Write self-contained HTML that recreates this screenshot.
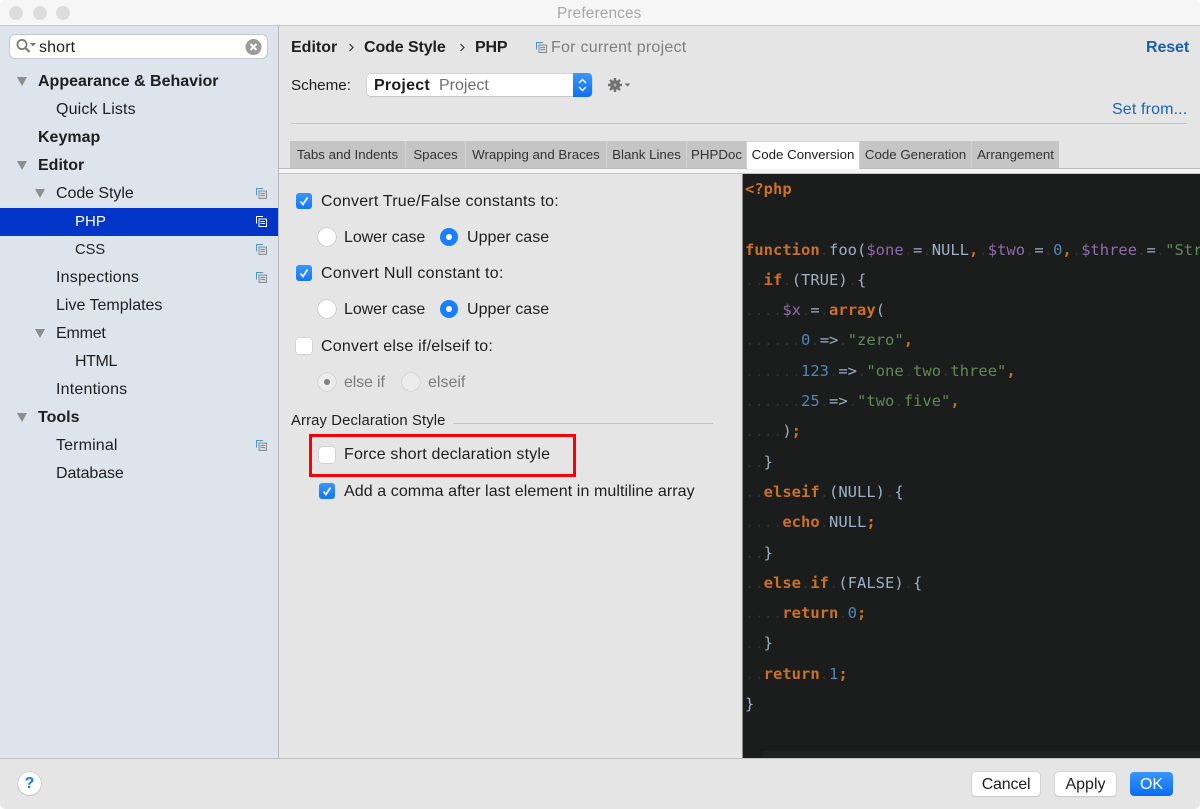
<!DOCTYPE html>
<html><head><meta charset="utf-8"><title>Preferences</title>
<style>
html,body{margin:0;padding:0;background:#fff;width:1200px;height:809px;overflow:hidden}
#w{position:relative;width:1200px;height:809px;overflow:hidden;background:#e5e5e5;border-radius:6px 6px 6px 6px;font-family:"Liberation Sans",sans-serif;font-size:16px;color:#1e1e1e;filter:blur(.3px)}
.a{position:absolute}
.t{position:absolute;white-space:nowrap;line-height:20px;height:20px;letter-spacing:.14px}
.b{font-weight:bold;letter-spacing:0}
.tab{position:absolute;top:141px;height:27px;background:#c5c5c5;font-size:13.3px;line-height:28px;text-align:center;color:#333;white-space:nowrap}
.cb{position:absolute;width:16px;height:16px;border-radius:3px;background:#fff;box-shadow:0 0 0 .5px #bdbdbd}
.cb.on{background:linear-gradient(#3a96fb,#1477f6);box-shadow:none}
.r{position:absolute;width:18px;height:18px;border-radius:50%;background:#fff;box-shadow:0 0 0 .5px #b5b5b5}
.r.on{background:#1a7ffa;box-shadow:none}
.r.on:after{content:"";position:absolute;left:6px;top:6px;width:6px;height:6px;border-radius:50%;background:#fff}
.r.d{background:#ececec;box-shadow:0 0 0 .5px #c4c4c4}
.tri{position:absolute;width:0;height:0;border-left:5.5px solid transparent;border-right:5.5px solid transparent;border-top:9px solid #8e8e8e}
.btn{position:absolute;top:772px;height:24px;background:#fff;border-radius:4px;box-shadow:0 0 0 .5px #c2c2c2,0 1px 1px #ccc;text-align:center;line-height:25px}
#code{position:absolute;left:745px;top:174px;width:455px;height:584px;overflow:hidden;font-family:"DejaVu Sans Mono",monospace;font-size:15.5px;line-height:30.3px;white-space:pre;color:#9db0c7}
#code b{color:#c9702b;font-weight:bold}
#code i{font-style:normal;color:#2f3232}
#code u{text-decoration:none;color:#8d6ca8}
#code s{text-decoration:none;color:#4f86b8}
#code em{font-style:normal;color:#5f8a55}
#code em i{color:#2f3232}
</style></head><body>
<div id="w">
<!-- title bar -->
<div class="a" style="left:0;top:0;width:1200px;height:25px;background:#f6f6f6;border-bottom:1px solid #c9c9c9"></div>
<div class="a" style="left:9px;top:6px;width:14px;height:14px;border-radius:50%;background:#dcdcdc"></div>
<div class="a" style="left:33px;top:6px;width:14px;height:14px;border-radius:50%;background:#dcdcdc"></div>
<div class="a" style="left:56px;top:6px;width:14px;height:14px;border-radius:50%;background:#dcdcdc"></div>
<div class="t" style="left:557px;top:4px;color:#a8a8a8;font-size:15.4px">Preferences</div>

<!-- sidebar -->
<div class="a" style="left:0;top:26px;width:278px;height:732px;background:#dee4ec;border-right:1px solid #b9b9b9"></div>
<div class="a" style="left:10px;top:35px;width:257px;height:23px;background:#fff;border-radius:5px;box-shadow:0 0 0 1px #c6cacf"></div>
<svg class="a" style="left:15px;top:38px" width="22" height="17" viewBox="0 0 22 17"><circle cx="7" cy="6.500" r="4.600" fill="none" stroke="#777" stroke-width="1.700"/><path d="M10.500 10l4 4" stroke="#777" stroke-width="2"/><path d="M15 5h6l-3 3.500z" fill="#777"/></svg>
<div class="t" style="left:39px;top:38px">short</div>
<svg class="a" style="left:245px;top:39px" width="17" height="17" viewBox="0 0 17 17"><circle cx="8.500" cy="8" r="8" fill="#9b9b9b"/><path d="M5.500 5l6 6M11.500 5l-6 6" stroke="#fff" stroke-width="2"/></svg>

<div class="tri" style="left:17px;top:77px"></div>
<div class="t b" style="left:38px;top:72px">Appearance &amp; Behavior</div>
<div class="t" style="left:56px;top:100px">Quick Lists</div>
<div class="t b" style="left:38px;top:128px">Keymap</div>
<div class="tri" style="left:17px;top:161px"></div>
<div class="t b" style="left:38px;top:156px">Editor</div>
<div class="tri" style="left:35px;top:189px"></div>
<div class="t" style="left:56px;top:184px;letter-spacing:-.06px">Code Style</div>
<div class="a" style="left:0;top:208px;width:278px;height:28px;background:#0336c8"></div>
<div class="t" style="left:75px;top:212px;color:#fff;font-size:15px;letter-spacing:0">PHP</div>
<div class="t" style="left:75px;top:240px;font-size:14.7px;letter-spacing:0">CSS</div>
<div class="t" style="left:56px;top:268px;letter-spacing:.2px">Inspections</div>
<div class="t" style="left:56px;top:296px;letter-spacing:0">Live Templates</div>
<div class="tri" style="left:35px;top:329px"></div>
<div class="t" style="left:56px;top:324px;letter-spacing:-.2px">Emmet</div>
<div class="t" style="left:75px;top:352px;letter-spacing:-.4px">HTML</div>
<div class="t" style="left:56px;top:380px;letter-spacing:.2px">Intentions</div>
<div class="tri" style="left:17px;top:413px"></div>
<div class="t b" style="left:38px;top:408px">Tools</div>
<div class="t" style="left:56px;top:436px">Terminal</div>
<div class="t" style="left:56px;top:464px;letter-spacing:-.1px">Database</div>

<svg width="0" height="0" style="position:absolute"><symbol id="cp" viewBox="0 0 11 11"><path d="M7 .5H.5V7.500" fill="#cfe0f0" stroke="#4f93c9" stroke-width="1"/><rect x="3" y="3" width="7.500" height="7.500" fill="#d5d8dc" stroke="#8a8f94"/><path d="M4.500 5.500h4.500M4.500 7.500h4.500" stroke="#8a8f94"/></symbol>
<symbol id="cw" viewBox="0 0 11 11"><path d="M7 .5H.5V7.500" fill="none" stroke="#fff"/><rect x="3" y="3" width="7.500" height="7.500" fill="none" stroke="#fff"/><path d="M4.500 5.500h4.500M4.500 7.500h4.500" stroke="#fff"/></symbol></svg>
<svg class="a" style="left:256px;top:188px" width="11" height="11"><use href="#cp"/></svg>
<svg class="a" style="left:256px;top:216px" width="11" height="11"><use href="#cw"/></svg>
<svg class="a" style="left:256px;top:244px" width="11" height="11"><use href="#cp"/></svg>
<svg class="a" style="left:256px;top:272px" width="11" height="11"><use href="#cp"/></svg>
<svg class="a" style="left:256px;top:440px" width="11" height="11"><use href="#cp"/></svg>

<!-- header -->
<div class="t b" style="left:291px;top:38px">Editor</div>
<svg class="a" style="left:348px;top:43px" width="7" height="10"><path d="M1.500 1l3.500 3.500L1.500 8" fill="none" stroke="#333" stroke-width="1.200"/></svg>
<div class="t b" style="left:364px;top:38px;letter-spacing:-.1px">Code Style</div>
<svg class="a" style="left:459px;top:43px" width="7" height="10"><path d="M1.500 1l3.500 3.500L1.500 8" fill="none" stroke="#333" stroke-width="1.200"/></svg>
<div class="t b" style="left:475px;top:38px;letter-spacing:-.2px">PHP</div>
<svg class="a" style="left:536px;top:42px" width="11" height="11"><use href="#cp"/></svg>
<div class="t" style="left:551px;top:38px;color:#7e7e7e;letter-spacing:.25px">For current project</div>
<div class="t b" style="left:1146px;top:38px;color:#1a5fae;letter-spacing:-.1px">Reset</div>

<div class="t" style="left:291px;top:76px;font-size:15.2px;letter-spacing:0">Scheme:</div>
<div class="a" style="left:367px;top:74px;width:225px;height:22px;background:#fff;border-radius:4px;box-shadow:0 0 0 .5px #c0c0c0,0 1px 1px #c8c8c8"></div>
<div class="a" style="left:573px;top:73px;width:19px;height:24px;border-radius:0 4px 4px 0;background:linear-gradient(#3d97fb,#0f6ff0)"></div>
<svg class="a" style="left:577px;top:77px" width="11" height="16"><path d="M2 6l3.500-3.500L9 6M2 10l3.500 3.500L9 10" fill="none" stroke="#fff" stroke-width="1.400"/></svg>
<div class="t b" style="left:374px;top:76px;letter-spacing:.25px">Project</div>
<div class="t" style="left:439px;top:76px;color:#6f6f6f;letter-spacing:0">Project</div>
<svg class="a" style="left:607px;top:77px" width="24" height="16" viewBox="0 0 24 16"><g fill="#717171"><circle cx="8" cy="8" r="5"/><g stroke="#717171" stroke-width="2.400"><path d="M8 1v14M1 8h14M3 3l10 10M13 3L3 13"/></g><path d="M17.500 6.500h6l-3 3z"/></g><circle cx="8" cy="8" r="1.500" fill="#b0b0b0"/></svg>
<div class="t" style="left:1112px;top:100px;color:#1a65b5">Set from...</div>
<div class="a" style="left:291px;top:123px;width:896px;height:1px;background:#c6c6c6"></div>

<!-- tabs -->
<div class="a" style="left:290px;top:141px;width:769px;height:27px;background:#d2d2d2"></div>
<div class="tab" style="left:290px;width:115px">Tabs and Indents</div>
<div class="tab" style="left:406px;width:59px">Spaces</div>
<div class="tab" style="left:466px;width:140px">Wrapping and Braces</div>
<div class="tab" style="left:607px;width:79px">Blank Lines</div>
<div class="tab" style="left:687px;width:59px">PHPDoc</div>
<div class="tab" style="left:860px;width:111px">Code Generation</div>
<div class="tab" style="left:972px;width:87px">Arrangement</div>
<div class="a" style="left:279px;top:168px;width:921px;height:1px;background:#bcbcbc"></div>
<div class="a" style="left:279px;top:169px;width:921px;height:4px;background:#f4f4f4"></div>
<div class="a" style="left:279px;top:173px;width:921px;height:1px;background:#c4c4c4"></div>
<div class="tab" style="left:747px;top:142px;width:112px;height:27px;line-height:26px;background:#fff;color:#1e1e1e">Code Conversion</div>

<!-- options -->
<div class="cb on" style="left:296px;top:193px"><svg width="16" height="16"><path d="M4.500 8.500l2.500 3L11.500 4.500" fill="none" stroke="#fff" stroke-width="1.700"/></svg></div>
<div class="t" style="left:321px;top:192px;letter-spacing:.21px">Convert True/False constants to:</div>
<div class="r" style="left:318px;top:228px"></div>
<div class="t" style="left:344px;top:228px;letter-spacing:-.06px">Lower case</div>
<div class="r on" style="left:440px;top:228px"></div>
<div class="t" style="left:467px;top:228px;letter-spacing:.04px">Upper case</div>
<div class="cb on" style="left:296px;top:265px"><svg width="16" height="16"><path d="M4.500 8.500l2.500 3L11.500 4.500" fill="none" stroke="#fff" stroke-width="1.700"/></svg></div>
<div class="t" style="left:321px;top:264px;letter-spacing:.3px">Convert Null constant to:</div>
<div class="r" style="left:318px;top:300px"></div>
<div class="t" style="left:344px;top:300px;letter-spacing:-.06px">Lower case</div>
<div class="r on" style="left:440px;top:300px"></div>
<div class="t" style="left:467px;top:300px;letter-spacing:.04px">Upper case</div>
<div class="cb" style="left:296px;top:338px"></div>
<div class="t" style="left:321px;top:337px;letter-spacing:.22px">Convert else if/elseif to:</div>
<div class="r d" style="left:318px;top:373px"><div class="a" style="left:6px;top:6px;width:6px;height:6px;border-radius:50%;background:#808080"></div></div>
<div class="t" style="left:344px;top:373px;color:#7c7c7c;letter-spacing:-.15px">else if</div>
<div class="r d" style="left:402px;top:373px"></div>
<div class="t" style="left:428px;top:373px;color:#7c7c7c;letter-spacing:0">elseif</div>

<div class="t" style="left:291px;top:411px;font-size:14.8px">Array Declaration Style</div>
<div class="a" style="left:453px;top:423px;width:260px;height:1px;background:#c4c4c4"></div>
<div class="a" style="left:309px;top:434px;width:261px;height:37px;border:3px solid #fb0007"></div>
<div class="cb" style="left:319px;top:447px"></div>
<div class="t" style="left:344px;top:445px;letter-spacing:.18px">Force short declaration style</div>
<div class="cb on" style="left:319px;top:483px"><svg width="16" height="16"><path d="M4.500 8.500l2.500 3L11.500 4.500" fill="none" stroke="#fff" stroke-width="1.700"/></svg></div>
<div class="t" style="left:344px;top:482px;letter-spacing:.08px">Add a comma after last element in multiline array</div>

<!-- editor -->
<div class="a" style="left:742px;top:174px;width:1px;height:584px;background:#8c8c8c"></div>
<div class="a" style="left:743px;top:174px;width:457px;height:584px;background:#1b1c1c"></div>
<div class="a" style="left:763px;top:751px;width:437px;height:7px;background:#202121"></div>
<div id="code"><b>&lt;?php</b>

<b>function</b><i>.</i>foo(<u>$one</u><i>.</i>=<i>.</i>NULL<b>,</b><i>.</i><u>$two</u><i>.</i>=<i>.</i><s>0</s><b>,</b><i>.</i><u>$three</u><i>.</i>=<i>.</i><em>"String"</em>
<i>..</i><b>if</b><i>.</i>(TRUE)<i>.</i>{
<i>....</i><u>$x</u><i>.</i>=<i>.</i><b>array</b>(
<i>......</i><s>0</s><i>.</i>=&gt;<i>.</i><em>"zero"</em><b>,</b>
<i>......</i><s>123</s><i>.</i>=&gt;<i>.</i><em>"one<i>.</i>two<i>.</i>three"</em><b>,</b>
<i>......</i><s>25</s><i>.</i>=&gt;<i>.</i><em>"two<i>.</i>five"</em><b>,</b>
<i>....</i>)<b>;</b>
<i>..</i>}
<i>..</i><b>elseif</b><i>.</i>(NULL)<i>.</i>{
<i>....</i><b>echo</b><i>.</i>NULL<b>;</b>
<i>..</i>}
<i>..</i><b>else</b><i>.</i><b>if</b><i>.</i>(FALSE)<i>.</i>{
<i>....</i><b>return</b><i>.</i><s>0</s><b>;</b>
<i>..</i>}
<i>..</i><b>return</b><i>.</i><s>1</s><b>;</b>
}</div>

<!-- bottom -->
<div class="a" style="left:0;top:758px;width:1200px;height:1px;background:#c2c2c2"></div>
<div class="a" style="left:18px;top:772px;width:23px;height:23px;border-radius:50%;background:#fff;box-shadow:0 0 0 .5px #bdbdbd,0 1px 1px #c4c4c4;color:#1a7af5;font-weight:bold;font-size:16px;line-height:23px;text-align:center">?</div>
<div class="btn" style="left:972px;width:68px;letter-spacing:-.2px">Cancel</div>
<div class="btn" style="left:1055px;width:61px">Apply</div>
<div class="btn" style="left:1130px;width:43px;background:linear-gradient(#3a95fb,#0a6cf5);color:#fff;box-shadow:none">OK</div>
</div>
</body></html>
